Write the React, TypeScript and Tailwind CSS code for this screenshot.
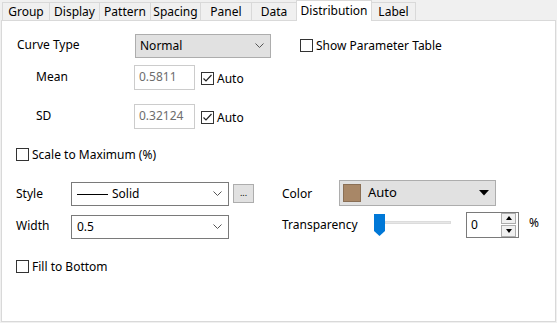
import React from "react";

const tabs = [
  { name: "Group", w: "w-[47px]" },
  { name: "Display", w: "w-[50px]" },
  { name: "Pattern", w: "w-[51px]" },
  { name: "Spacing", w: "w-[50px]" },
  { name: "Panel", w: "w-[51px]" },
  { name: "Data", w: "w-[45px]" },
];

function Chevron() {
  return (
    <svg width="9" height="6" viewBox="0 0 9 6" className="shrink-0">
      <polyline points="0.5,0.5 4.5,4.5 8.5,0.5" fill="none" stroke="#555" strokeWidth="1" />
    </svg>
  );
}

function CheckBox({ checked = false }: { checked?: boolean }) {
  return (
    <div className="w-[13px] h-[13px] border border-[#333] bg-white shrink-0 flex items-center justify-center">
      {checked && (
        <svg width="11" height="11" viewBox="0 0 11 11">
          <polyline points="1.5,5.5 4,8 9.5,2" fill="none" stroke="#222" strokeWidth="1.2" />
        </svg>
      )}
    </div>
  );
}

function Check({ label, checked = false }: { label: string; checked?: boolean }) {
  return (
    <div className="flex items-center gap-[3px]">
      <CheckBox checked={checked} />
      <span className="leading-none">{label}</span>
    </div>
  );
}

export default function App() {
  return (
    <div className="w-[557px] h-[323px] bg-[#f0f0f0] font-['Noto_Sans',sans-serif] text-[12px] text-black overflow-hidden">
      {/* tab strip */}
      <div className="flex items-end h-[20px] pl-[2px]">
        {tabs.map((t) => (
          <div
            key={t.name}
            className={`${t.w} h-[18px] border-l border-t border-[#d9d9d9] bg-[#f0f0f0] flex items-center justify-center leading-none`}
          >
            {t.name}
          </div>
        ))}
        <div className="w-[76px] h-[21px] -mb-px relative z-10 border-l border-t border-r border-[#d9d9d9] bg-white flex justify-center pt-[4px] leading-none">
          Distribution
        </div>
        <div className="w-[44px] h-[18px] border-t border-r border-[#d9d9d9] bg-[#f0f0f0] flex items-center justify-center leading-none">
          Label
        </div>
      </div>

      {/* panel */}
      <div className="ml-[1px] w-[555px] h-[302px] border border-[#d9d9d9] bg-white relative">
        <div className="pl-[15px] pt-[13px]">
          {/* curve type */}
          <div className="flex items-center h-[24px]">
            <span className="w-[118px] -mt-[3px]">Curve Type</span>
            <div className="w-[136px] h-[24px] bg-[#e1e1e1] border border-[#adadad] flex items-center justify-between pl-[4px] pr-[6px]">
              <span>Normal</span>
              <Chevron />
            </div>
            <div className="ml-[29px] -mt-[1px]">
              <Check label="Show Parameter Table" />
            </div>
          </div>

          {/* mean */}
          <div className="flex items-center h-[25px] mt-[7px]">
            <span className="w-[117px] pl-[19px] -mt-[2px]">Mean</span>
            <div className="w-[61px] h-[25px] border border-[#cccccc] text-[#6d6d6d] pl-[4px] pt-[2px]">0.5811</div>
            <div className="ml-[6px] mt-[2px]">
              <Check label="Auto" checked />
            </div>
          </div>

          {/* sd */}
          <div className="flex items-center h-[25px] mt-[14px]">
            <span className="w-[117px] pl-[19px] -mt-[2px]">SD</span>
            <div className="w-[61px] h-[25px] border border-[#cccccc] text-[#6d6d6d] pl-[4px] pt-[2px]">0.32124</div>
            <div className="ml-[6px] mt-[2px]">
              <Check label="Auto" checked />
            </div>
          </div>

          {/* scale */}
          <div className="mt-[19px] h-[13px] flex items-center -ml-[1px]">
            <Check label="Scale to Maximum (%)" />
          </div>

          {/* style / color */}
          <div className="flex items-center h-[26px] mt-[19px] -ml-[1px]">
            <span className="w-[55px] mt-[1px]">Style</span>
            <div className="w-[158px] h-[24px] border border-[#7a7a7a] bg-white flex items-center justify-between pl-[5px] pr-[6px] mt-[2px]">
              <div className="flex items-center">
                <div className="w-[31px] h-px bg-black" />
                <span className="ml-[4px]">Solid</span>
              </div>
              <Chevron />
            </div>
            <div className="ml-[4px] w-[21px] h-[19px] bg-[#e1e1e1] border border-[#adadad] flex items-center justify-center text-[9px] leading-none pb-[3px] mt-[1px]">
              ...
            </div>
            <span className="ml-[28px] w-[57px] mt-[1px]">Color</span>
            <div className="w-[157px] h-[26px] bg-[#e1e1e1] border border-[#adadad] flex items-center pl-[3px] pr-[6px]">
              <div className="w-[18px] h-[18px] bg-[#a88767] border border-[#8a6f55]" />
              <span className="ml-[7px] text-[13px]">Auto</span>
              <svg width="10" height="6" viewBox="0 0 10 6" className="ml-auto">
                <polygon points="0,0 10,0 5,5.5" fill="#000" />
              </svg>
            </div>
          </div>

          {/* width / transparency */}
          <div className="flex items-center h-[27px] mt-[5px] -ml-[1px]">
            <span className="w-[55px] mt-[3px]">Width</span>
            <div className="w-[158px] h-[24px] border border-[#7a7a7a] bg-white flex items-center justify-between pl-[5px] pr-[6px] mt-[5px]">
              <span>0.5</span>
              <Chevron />
            </div>
            <span className="ml-[53px] w-[92px] mt-[1px]">Transparency</span>
            <div className="relative w-[78px] h-[22px] flex items-center">
              <div className="absolute left-[11px] top-[7px] w-[66px] h-[3px] bg-[#e7e7e7] border border-[#dcdcdc]" />
              <svg width="11" height="22" viewBox="0 0 11 22" className="relative">
                <polygon points="0,0 11,0 11,17 5.5,22 0,17" fill="#0078d7" />
              </svg>
            </div>
            <div className="ml-[14px] w-[53px] h-[26px] border border-[#7a7a7a] bg-white flex items-center">
              <span className="pl-[4px] flex-1">0</span>
              <div className="w-[15px] h-[24px] mr-[2px] flex flex-col gap-px">
                <div className="flex-1 bg-[#f0f0f0] border border-[#adadad] flex items-center justify-center">
                  <svg width="6" height="4" viewBox="0 0 6 4"><polygon points="0,4 6,4 3,0" fill="#000" /></svg>
                </div>
                <div className="flex-1 bg-[#f0f0f0] border border-[#adadad] flex items-center justify-center">
                  <svg width="6" height="4" viewBox="0 0 6 4"><polygon points="0,0 6,0 3,4" fill="#000" /></svg>
                </div>
              </div>
            </div>
            <span className="ml-[10px] -mt-[3px]">%</span>
          </div>

          {/* fill */}
          <div className="mt-[22px] h-[13px] flex items-center -ml-[1px]">
            <Check label="Fill to Bottom" />
          </div>
        </div>
      </div>
    </div>
  );
}
